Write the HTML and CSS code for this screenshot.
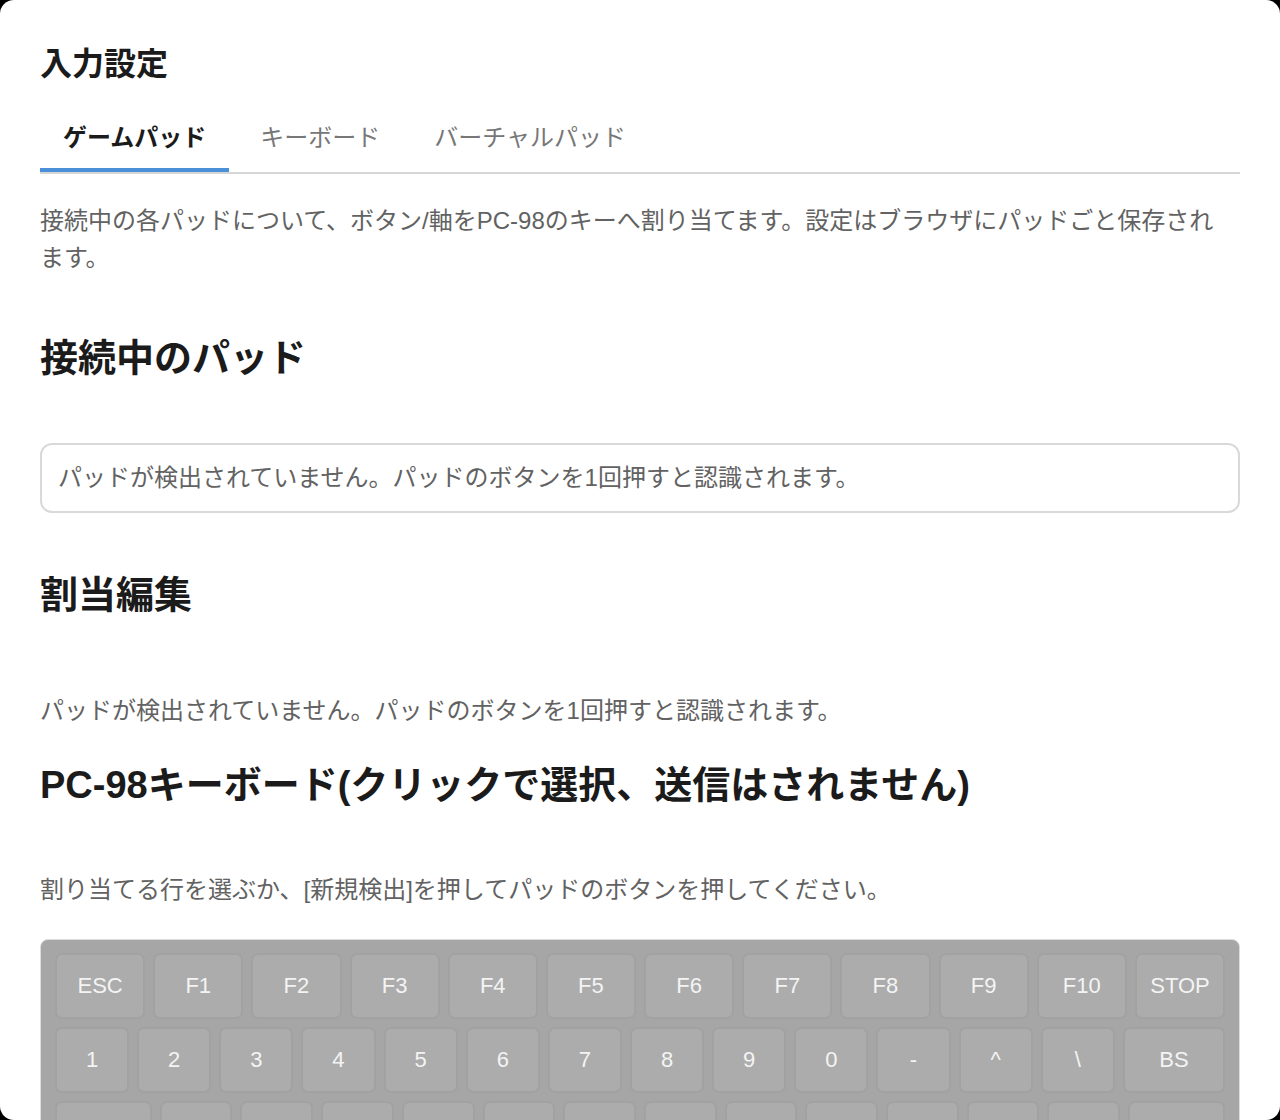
FILE: index.html
```html
<!DOCTYPE html>
<html lang="ja">

<head>
    <meta charset="UTF-8">
    <meta name="viewport" content="width=device-width, initial-scale=1.0">
    <title>入力設定</title>
    <link rel="stylesheet" href="styles.css">
</head>

<body>

    <div class="dialog">
        <h1 class="dialog-title">入力設定</h1>

        <div class="tabs">
            <div class="tab active">ゲームパッド</div>
            <div class="tab">キーボード</div>
            <div class="tab">バーチャルパッド</div>
        </div>

        <p class="desc">接続中の各パッドについて、ボタン/軸をPC-98のキーへ割り当てます。設定はブラウザにパッドごと保存されます。</p>

        <!-- 接続中のパッド -->
        <h2 class="section-title first">接続中のパッド</h2>
        <div class="pad-list">パッドが検出されていません。パッドのボタンを1回押すと認識されます。</div>

        <!-- 割当編集 -->
        <h2 class="section-title">割当編集</h2>
        <p class="note mapping-note">パッドが検出されていません。パッドのボタンを1回押すと認識されます。</p>

        <h2 class="section-title kb-title">PC-98キーボード(クリックで選択、送信はされません)</h2>
        <p class="note kb-note">割り当てる行を選ぶか、[新規検出]を押してパッドのボタンを押してください。</p>

        <div class="keyboard">
            <div class="kb-row">
                <div class="key">ESC</div>
                <div class="key">F1</div>
                <div class="key">F2</div>
                <div class="key">F3</div>
                <div class="key">F4</div>
                <div class="key">F5</div>
                <div class="key">F6</div>
                <div class="key">F7</div>
                <div class="key">F8</div>
                <div class="key">F9</div>
                <div class="key">F10</div>
                <div class="key">STOP</div>
            </div>
            <div class="kb-row">
                <div class="key">1</div>
                <div class="key">2</div>
                <div class="key">3</div>
                <div class="key">4</div>
                <div class="key">5</div>
                <div class="key">6</div>
                <div class="key">7</div>
                <div class="key">8</div>
                <div class="key">9</div>
                <div class="key">0</div>
                <div class="key">-</div>
                <div class="key">^</div>
                <div class="key">\</div>
                <div class="key wide-bs">BS</div>
            </div>
            <div class="kb-row">
                <div class="key wide">TAB</div>
                <div class="key">Q</div>
                <div class="key">W</div>
                <div class="key">E</div>
                <div class="key">R</div>
                <div class="key">T</div>
                <div class="key">Y</div>
                <div class="key">U</div>
                <div class="key">I</div>
                <div class="key">O</div>
                <div class="key">P</div>
                <div class="key">@</div>
                <div class="key">[</div>
                <div class="key wide">RETURN</div>
            </div>
        </div>
    </div>

</body>

</html>
```

FILE: styles.css
```css
body {
    margin: 0;
    padding: 0;
    background-color: #000;
    font-family: "Liberation Sans", "Noto Sans CJK JP", sans-serif;
}

.dialog {
    width: 1280px;
    height: 1120px;
    box-sizing: border-box;
    padding: 44px 40px 0;
    background-color: #fff;
    border-radius: 14px;
    overflow: hidden;
}

.dialog-title {
    margin: 0;
    font-size: 32px;
    line-height: 40px;
    font-weight: bold;
    color: #1b1b1b;
}

.tabs {
    display: flex;
    gap: 8px;
    margin-top: 22px;
    border-bottom: 2px solid #d6d6d6;
}

.tab {
    padding: 14px 23px 12px;
    font-size: 24px;
    line-height: 36px;
    color: #777;
    border-bottom: 4px solid transparent;
    cursor: pointer;
}

.tab.active {
    color: #1b1b1b;
    font-weight: bold;
    border-bottom-color: #4a90d9;
}

.desc {
    margin: 28px 0 0;
    padding-right: 16px;
    font-size: 24px;
    line-height: 37px;
    color: #626262;
}

.section-title {
    margin: 0;
    font-size: 38px;
    line-height: 50px;
    font-weight: bold;
    color: #1b1b1b;
}

.section-title.first {
    margin-top: 57px;
}

.pad-list {
    margin-top: 60px;
    padding: 14px 16px;
    border: 2px solid #d9d9d9;
    border-radius: 12px;
    font-size: 24px;
    line-height: 38px;
    color: #626262;
}

.pad-list + .section-title {
    margin-top: 57px;
}

.note {
    margin: 0;
    font-size: 24px;
    line-height: 37px;
    color: #626262;
}

.mapping-note {
    margin-top: 72px;
}

.kb-title {
    margin-top: 31px;
}

.kb-note {
    margin-top: 61px;
}

.keyboard {
    margin-top: 31px;
    padding: 13px 14px;
    background-color: #a6a6a6;
    border: 1px solid #dcdcdc;
    border-radius: 8px;
    display: flex;
    flex-direction: column;
    gap: 8px;
}

.kb-row {
    display: flex;
    gap: 8px;
}

.key {
    flex: 1 1 0;
    min-width: 0;
    height: 66px;
    box-sizing: border-box;
    display: flex;
    align-items: center;
    justify-content: center;
    background-color: #acacac;
    border: 2px solid #a2a2a2;
    border-radius: 7px;
    color: #f4f4f4;
    font-size: 22px;
}

.key.wide-bs {
    flex-grow: 1.4;
}

.key.wide {
    flex-grow: 1.35;
}
```
